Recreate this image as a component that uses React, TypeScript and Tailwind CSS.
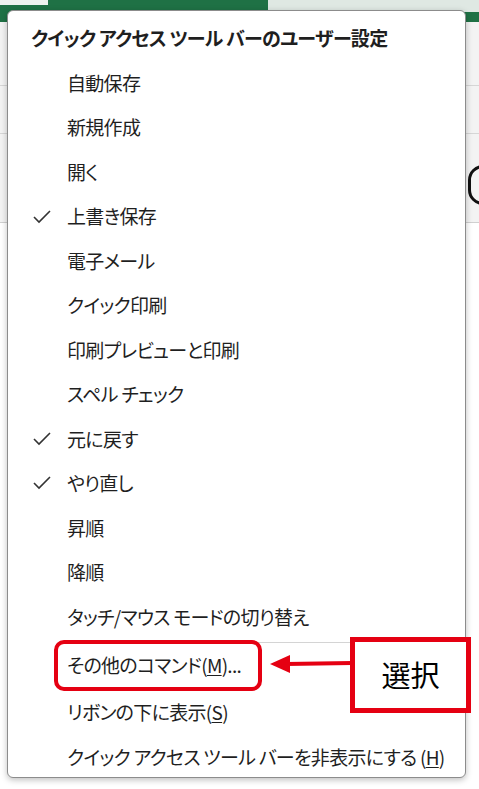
import { ReactNode } from 'react';

type Item = { label: ReactNode; checked?: boolean };

const items: Item[] = [
  { label: '自動保存' },
  { label: '新規作成' },
  { label: '開く' },
  { label: '上書き保存', checked: true },
  { label: '電子メール' },
  { label: 'クイック印刷' },
  { label: '印刷プレビューと印刷' },
  { label: 'スペル チェック' },
  { label: '元に戻す', checked: true },
  { label: 'やり直し', checked: true },
  { label: '昇順' },
  { label: '降順' },
  { label: 'タッチ/マウス モードの切り替え' },
];

function Check() {
  return (
    <svg width="20" height="16" viewBox="0 0 20 16" className="text-[#333]">
      <polyline points="2,8 7,13 18,2" fill="none" stroke="currentColor" strokeWidth="1.6" />
    </svg>
  );
}

function Row({ item }: { item: Item }) {
  return (
    <div className="flex h-[44.5px] items-center">
      <div className="flex w-[59px] justify-end pr-[15px]">{item.checked && <Check />}</div>
      <span>{item.label}</span>
    </div>
  );
}

export default function App() {
  return (
    <div
      className="relative h-[789px] w-[479px] overflow-hidden bg-[#f3f3f3] text-[19px] tracking-[-0.7px] text-[#1f1f1f] [font-feature-settings:'palt']"
      style={{ fontFamily: '"Noto Sans CJK JP", "Noto Sans", sans-serif' }}
    >
      {/* background ribbon */}
      <div className="h-[22px] bg-[#1f7145]" />
      <div className="absolute left-[268px] top-0 h-[12px] w-[211px] bg-[#dfe8e3]" />
      <div className="absolute left-0 top-0 h-[5px] w-[48px] bg-[#eef2ef]" />
      <div className="absolute left-0 top-[85px] h-px w-full bg-[#d6d6d6]" />
      <div className="absolute left-0 top-[133px] h-px w-full bg-[#d6d6d6]" />
      <div className="absolute left-0 top-[222px] h-[567px] w-full border-t border-[#d0d0d0] bg-white" />
      <div className="absolute left-[468px] top-[165px] h-[40px] w-[30px] rounded-full border-[3px] border-[#111]" />

      {/* menu */}
      <div className="absolute left-[7px] top-[10px] flex h-[768px] w-[459px] flex-col rounded-[6px] border border-[#8c8c8c] bg-white pt-[5px] shadow-[0_2px_6px_rgba(0,0,0,0.25)]">
        <div className="flex h-[45px] items-center pl-[23px] font-bold">クイック アクセス ツール バーのユーザー設定</div>
        {items.map((it, i) => (
          <Row key={i} item={it} />
        ))}
        <div className="ml-[52px] mr-[4px] mt-[3px] h-px bg-[#d4d4d4]" />
        <div className="flex h-[44px] items-center pl-[59px]">
          その他のコマンド(<span className="underline underline-offset-2">M</span>)...
        </div>
        <div className="flex h-[50px] items-center pl-[59px]">
          リボンの下に表示(<span className="underline underline-offset-2">S</span>)
        </div>
        <div className="flex h-[40px] items-center pl-[59px]">
          クイック アクセス ツール バーを非表示にする (<span className="underline underline-offset-2">H</span>)
        </div>
      </div>

      {/* annotation */}
      <div className="absolute left-[54px] top-[640px] h-[51px] w-[208px] rounded-[10px] border-[4.5px] border-[#e50012]" />
      <svg className="absolute left-[268px] top-[652px]" width="84" height="24" viewBox="0 0 84 24">
        <line x1="18" y1="12" x2="84" y2="11" stroke="#e50012" strokeWidth="4" />
        <polygon points="2,12 22,3 22,21" fill="#e50012" />
      </svg>
      <div className="absolute left-[350px] top-[637px] flex h-[76px] w-[121px] items-center justify-center border-[5px] border-[#e50012] bg-white text-[29px] tracking-normal text-black">
        選択
      </div>
    </div>
  );
}
